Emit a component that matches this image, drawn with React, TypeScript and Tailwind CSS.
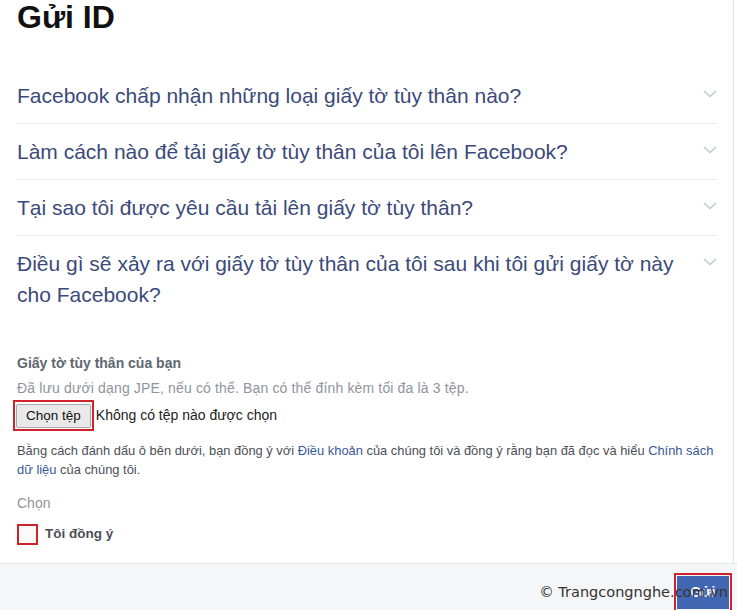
import React from "react";

const faqs = [
  "Facebook chấp nhận những loại giấy tờ tùy thân nào?",
  "Làm cách nào để tải giấy tờ tùy thân của tôi lên Facebook?",
  "Tại sao tôi được yêu cầu tải lên giấy tờ tùy thân?",
  "Điều gì sẽ xảy ra với giấy tờ tùy thân của tôi sau khi tôi gửi giấy tờ này cho Facebook?",
];

function Chevron() {
  return (
    <svg width="14" height="8" viewBox="0 0 14 8" className="shrink-0 mt-[10px]">
      <path d="M1 1l6 5.5L13 1" fill="none" stroke="#c4c8cf" strokeWidth="1.5" />
    </svg>
  );
}

export default function App() {
  return (
    <div
      className="w-[737px] h-[610px] bg-white overflow-hidden flex flex-col"
      style={{ fontFamily: '"Liberation Sans", Arial, sans-serif' }}
    >
      <div className="flex-1 flex flex-col border-r border-[#e2e4e8] mr-[3px]">
        <h1 className="text-[32px] font-bold text-[#111] leading-[36px] pl-[17px] -mt-[1px]">
          Gửi ID
        </h1>
        <div className="pl-[17px] pr-[16px] mt-[45px]">
          {faqs.map((q, i) => (
            <div
              key={i}
              className={`flex items-start justify-between gap-4 ${
                i < faqs.length - 1 ? "border-b border-[#e9ebee] pb-[12px] mb-[12px]" : ""
              }`}
            >
              <div className="text-[21px] leading-[31px] text-[#3b4a7a] pr-1">{q}</div>
              <Chevron />
            </div>
          ))}
        </div>
        <div className="pl-[17px] pr-[14px] mt-[44px]">
          <div className="font-bold text-[#606770] text-[14px] leading-[18px]">Giấy tờ tùy thân của bạn</div>
          <div className="text-[#90949c] text-[14px] tracking-[0.15px] leading-[18px] mt-[7px]">
            Đã lưu dưới dạng JPE, nếu có thể. Bạn có thể đính kèm tối đa là 3 tệp.
          </div>
          <div className="flex items-center mt-[3px]">
            <div className="border-2 border-[#d0222a] p-[1px] -ml-[4px]">
              <button className="h-[24px] px-[9px] text-[13.5px] text-[#111] bg-[#e9e9e9] border border-[#a9a9a9] rounded-[2px] leading-none">
                Chọn tệp
              </button>
            </div>
            <span className="text-[14px] text-[#222] ml-[2px]">Không có tệp nào được chọn</span>
          </div>
          <p className="text-[12.9px] leading-[19px] text-[#4b4f56] mt-[10px]">
            Bằng cách đánh dấu ô bên dưới, bạn đồng ý với <span className="text-[#385898]">Điều khoản</span> của chúng tôi và đồng ý rằng bạn đã đọc và hiểu <span className="text-[#385898]">Chính sách dữ liệu</span> của chúng tôi.
          </p>
          <div className="text-[14px] text-[#90949c] mt-[15px] leading-[18px]">Chọn</div>
          <div className="flex items-center mt-[12px]">
            <div className="w-[21px] h-[21px] border-2 border-[#d0222a] bg-[#fafafa]" />
            <span className="ml-[7px] text-[13.5px] font-bold text-[#4b4f56]">Tôi đồng ý</span>
          </div>
        </div>
      </div>
      <div className="h-[47px] bg-[#f5f6f7] border-t border-[#e5e7ea] relative flex justify-end items-start pr-[5px] pt-[9px]">
        <div className="border-2 border-[#d0222a] p-[1px]">
          <div className="w-[52px] h-[33px] bg-[#4267b2] text-white font-bold text-[14px] flex items-center justify-center">
            Gửi
          </div>
        </div>
        <div
          className="absolute right-[9px] top-[18px] text-[14.5px] text-[#333] whitespace-nowrap"
          style={{ fontFamily: '"DejaVu Sans", sans-serif' }}
        >
          © Trangcongnghe.com.vn
        </div>
      </div>
    </div>
  );
}
